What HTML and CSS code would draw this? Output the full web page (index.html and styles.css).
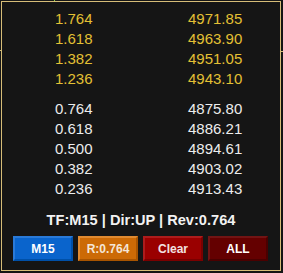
FILE: index.html
```html
<!DOCTYPE html>
<html>
<head>
<meta charset="utf-8">
<link rel="stylesheet" href="styles.css">
</head>
<body>
<div class="panel">
  <div class="grid levels-up">
    <span>1.764</span><span>4971.85</span>
    <span>1.618</span><span>4963.90</span>
    <span>1.382</span><span>4951.05</span>
    <span>1.236</span><span>4943.10</span>
  </div>
  <div class="grid levels-down">
    <span>0.764</span><span>4875.80</span>
    <span>0.618</span><span>4886.21</span>
    <span>0.500</span><span>4894.61</span>
    <span>0.382</span><span>4903.02</span>
    <span>0.236</span><span>4913.43</span>
  </div>
  <div class="status">TF:M15 | Dir:UP | Rev:0.764</div>
  <div class="buttons">
    <div class="btn btn-blue">M15</div>
    <div class="btn btn-orange">R:0.764</div>
    <div class="btn btn-red">Clear</div>
    <div class="btn btn-dark">ALL</div>
  </div>
</div>
<div class="tick tick-left"></div>
<div class="tick tick-right"></div>
<div class="tick tick-top"></div>
</body>
</html>
```
FILE: styles.css
```css
html, body {
  margin: 0;
  padding: 0;
  background: #151515;
  width: 283px;
  height: 273px;
  overflow: hidden;
  position: relative;
}
.panel {
  margin: 1px 0 0 1px;
  width: 280px;
  height: 270px;
  box-sizing: border-box;
  border: 1px solid #d6bd78;
  background: #151515;
  padding: 7px 0 0 0;
  display: flex;
  flex-direction: column;
}
.grid {
  display: grid;
  grid-template-columns: 133px 1fr;
  padding-left: 53px;
  font-family: "Liberation Sans Narrow", "Liberation Sans", Arial, sans-serif;
  font-size: 15px;
  line-height: 20px;
}
.levels-up { color: #e3c034; }
.levels-down { color: #ececec; margin-top: 10px; }
.status {
  margin-top: 11px;
  text-align: center;
  font-family: "Liberation Sans", Arial, sans-serif;
  font-weight: bold;
  font-size: 14.6px;
  line-height: 20px;
  color: #f2f2f2;
}
.buttons {
  margin-top: 6px;
  display: flex;
  justify-content: center;
  gap: 5px;
  padding-right: 1px;
}
.btn {
  width: 60px;
  height: 25px;
  box-sizing: border-box;
  border: 2px solid;
  display: flex;
  align-items: center;
  justify-content: center;
  font-family: "Liberation Sans", Arial, sans-serif;
  font-weight: bold;
  font-size: 12px;
  color: #ffffff;
}
.btn-blue {
  background: #0a64cc;
  border-color: #2a7ad8 #0050a8 #0050a8 #2a7ad8;
}
.btn-orange {
  background: #cc6a06;
  border-color: #e08a30 #a85400 #a85400 #e08a30;
  color: #f4e6d6;
}
.btn-red {
  background: #9a0000;
  border-color: #ad1c1c #7a0000 #7a0000 #ad1c1c;
  color: #f2e2e2;
}
.btn-dark {
  background: #640000;
  border-color: #721414 #4a0000 #4a0000 #721414;
}
.tick {
  position: absolute;
  background: #d6bd78;
}
.tick-left { left: 0; top: 50px; width: 2px; height: 1px; }
.tick-right { left: 281px; top: 51px; width: 2px; height: 1px; }
.tick-top { left: 54px; top: 0; width: 1px; height: 1px; background: #7fd040; }
```
